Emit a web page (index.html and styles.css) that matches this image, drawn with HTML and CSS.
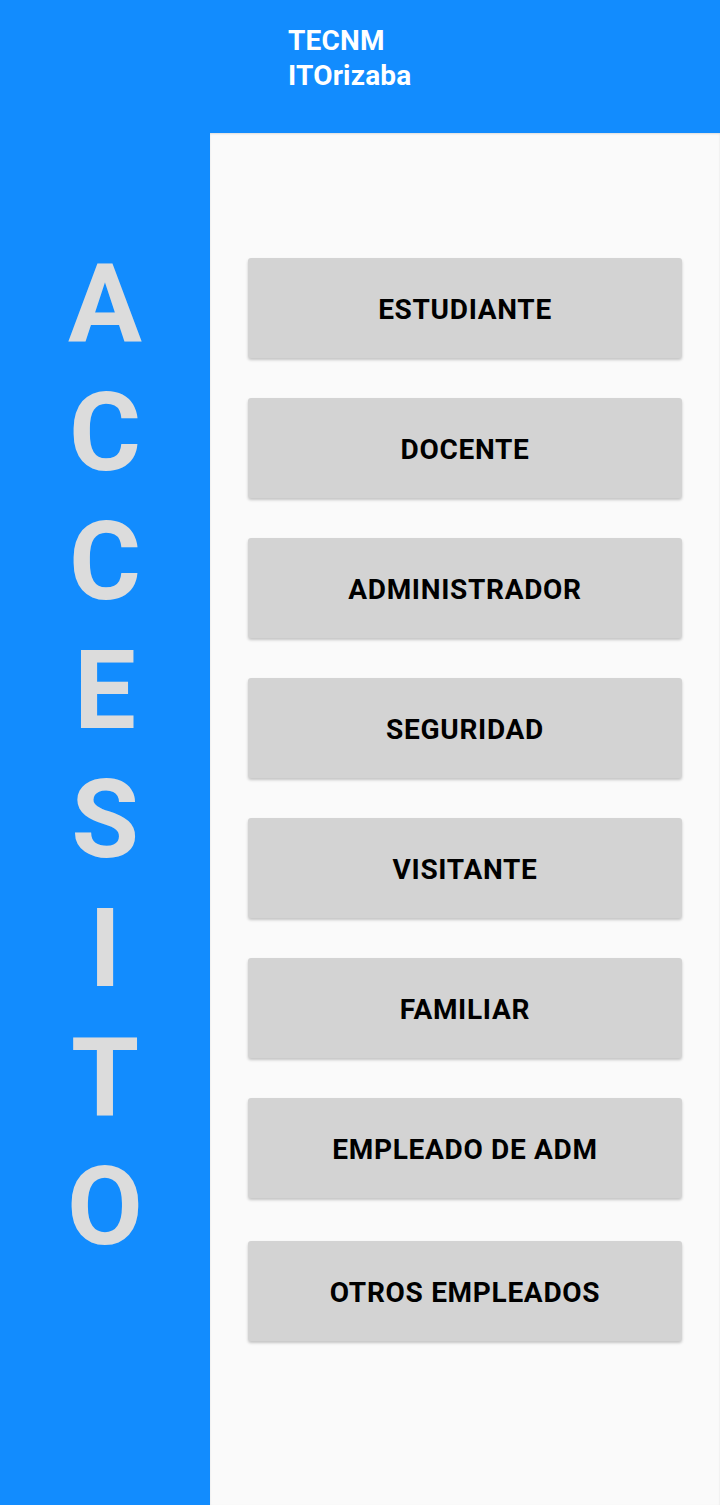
FILE: index.html
```html
<!DOCTYPE html>
<html lang="es">
<head>
<meta charset="utf-8">
<title>Acceso ITOrizaba</title>
<link rel="stylesheet" href="styles.css">
</head>
<body>
<header class="header">
  <div class="brand">TECNM<br>ITOrizaba</div>
</header>
<main class="main">
  <aside class="sidebar">
    <span>A</span><span>C</span><span>C</span><span>E</span><span>S</span><span>I</span><span>T</span><span>O</span>
  </aside>
  <section class="panel">
    <button class="btn">ESTUDIANTE</button>
    <button class="btn">DOCENTE</button>
    <button class="btn">ADMINISTRADOR</button>
    <button class="btn">SEGURIDAD</button>
    <button class="btn">VISITANTE</button>
    <button class="btn">FAMILIAR</button>
    <button class="btn">EMPLEADO DE ADM</button>
    <button class="btn btn-last">OTROS EMPLEADOS</button>
  </section>
</main>
</body>
</html>
```
FILE: styles.css
```css
* { box-sizing: border-box; }
html, body {
  margin: 0;
  padding: 0;
  width: 720px;
  height: 1505px;
  overflow: hidden;
  font-family: Roboto, "Liberation Sans", sans-serif;
}
.header {
  height: 133px;
  background: #128cfe;
  padding: 23px 0 0 288px;
}
.brand {
  color: #ffffff;
  font-weight: 700;
  font-size: 28px;
  line-height: 35px;
  letter-spacing: 0.2px;
}
.main {
  display: flex;
  height: 1372px;
}
.sidebar {
  width: 210px;
  flex: none;
  background: #128cfe;
  display: flex;
  flex-direction: column;
  align-items: center;
  padding-top: 106px;
  color: #dcdcdc;
  font-weight: 700;
  font-size: 110px;
  line-height: 129px;
}
.panel {
  flex: 1;
  background: #fafafa;
  display: flex;
  flex-direction: column;
  gap: 40px;
  padding: 125px 0 0 38px;
  box-shadow: inset 0 1px 2px rgba(0,0,0,0.12);
}
.btn {
  width: 434px;
  height: 100px;
  flex: none;
  border: none;
  border-radius: 3px;
  background: #d3d3d3;
  color: #000000;
  font-family: Roboto, "Liberation Sans", sans-serif;
  font-weight: 700;
  font-size: 28px;
  letter-spacing: 0.7px;
  box-shadow: 0 2px 3px rgba(0,0,0,0.22);
  padding: 3px 0 0 0;
}
.btn-last {
  margin-top: 3px;
}
```
